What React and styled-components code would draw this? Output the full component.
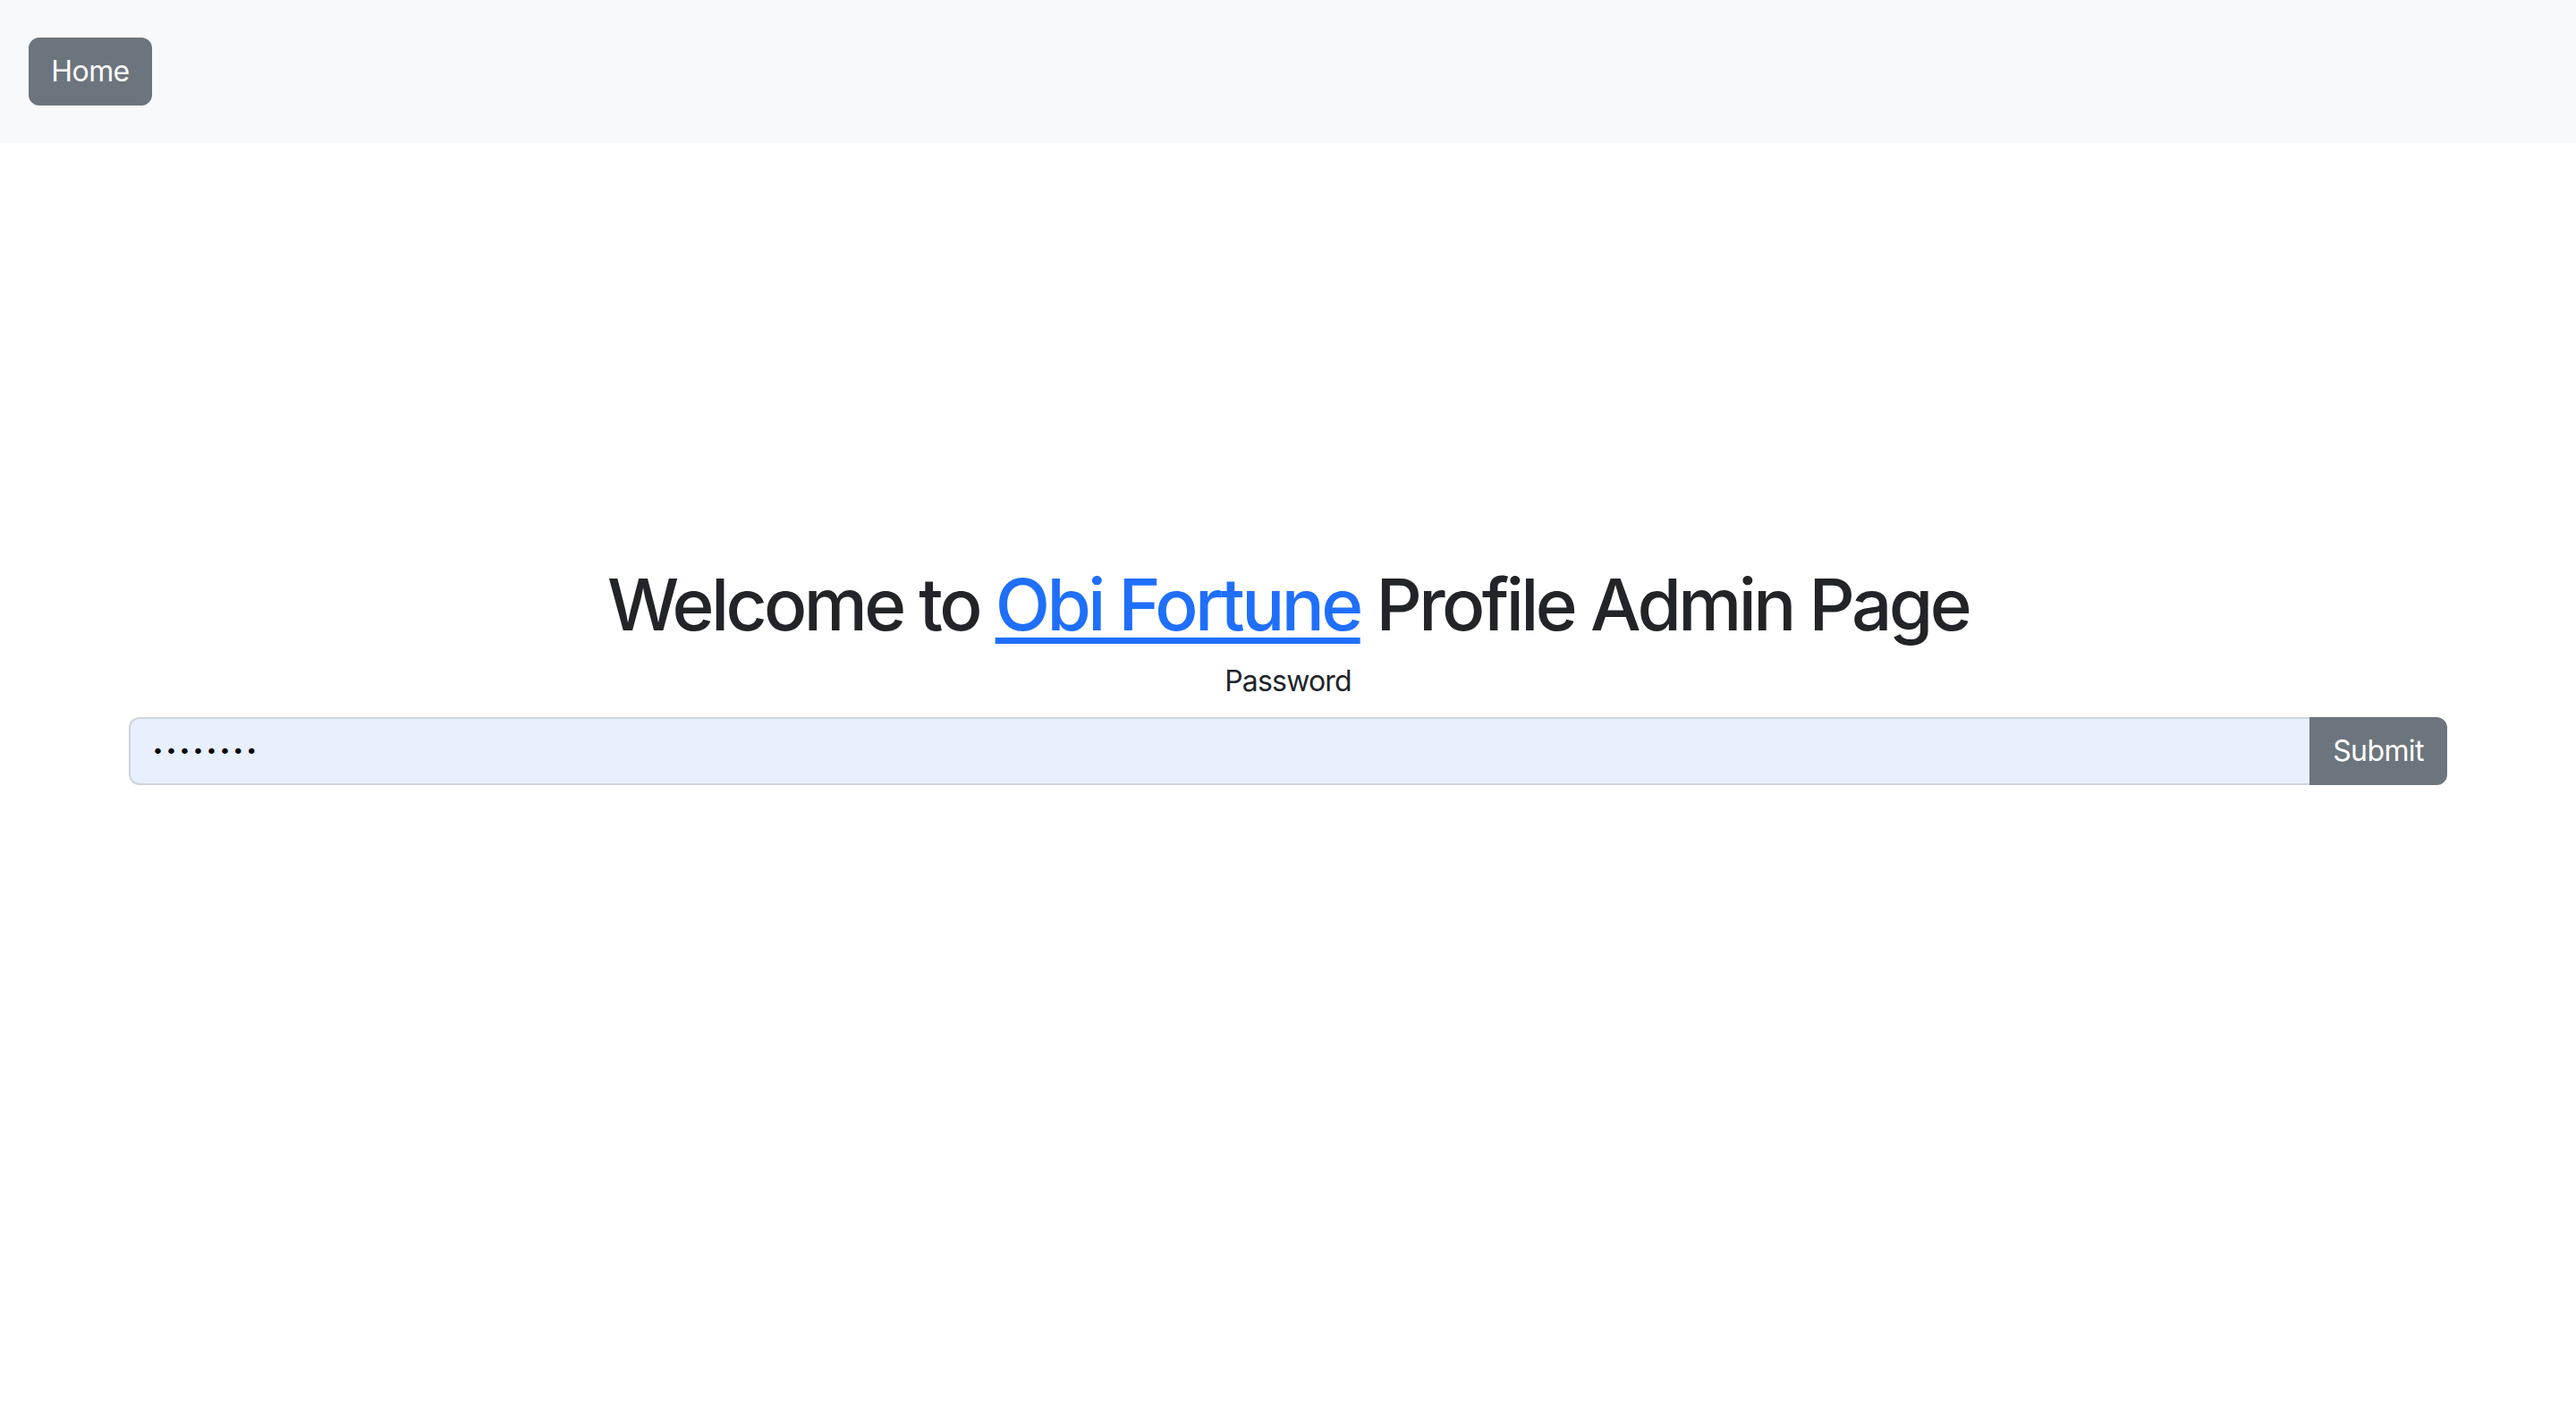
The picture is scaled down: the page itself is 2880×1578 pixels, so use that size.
import styled, { createGlobalStyle } from 'styled-components';

const GlobalStyle = createGlobalStyle`
  body {
    margin: 0;
    background: #ffffff;
    color: #212529;
    font-family: "Inter", "Noto Sans", sans-serif;
  }
`;

const App = () => {
  return (
    <>
      <GlobalStyle />
      <NavBar>
        <HomeBtn type="button">Home</HomeBtn>
      </NavBar>
      <Main>
        <Title>
          Welcome to <TitleLink href="#">Obi Fortune</TitleLink> Profile Admin Page
        </Title>
        <Label htmlFor="password">Password</Label>
        <InputGroup>
          <PasswordInput id="password" type="password" defaultValue="password" readOnly />
          <SubmitBtn type="button">Submit</SubmitBtn>
        </InputGroup>
      </Main>
    </>
  );
};

const NavBar = styled.nav`
  box-sizing: border-box;
  height: 160px;
  background-color: #f8f9fa;
  display: flex;
  align-items: flex-start;
  padding: 42px 32px 0;
`;

const Button = styled.button`
  box-sizing: border-box;
  height: 76px;
  padding: 0;
  font-family: "Inter", "Noto Sans", sans-serif;
  font-size: 32px;
  line-height: 48px;
  letter-spacing: -0.6px;
  color: #ffffff;
  background-color: #6c757d;
  border: 2px solid #6c757d;
  border-radius: 12px;
  cursor: pointer;
`;

const HomeBtn = styled(Button)`
  width: 138px;
`;

const SubmitBtn = styled(Button)`
  width: 154px;
  border-radius: 0 12px 12px 0;
  flex: none;
`;

const Main = styled.main`
  box-sizing: border-box;
  max-width: 2640px;
  margin: 0 auto;
  padding: 468px 24px 0;
  display: flex;
  flex-direction: column;
  align-items: center;
`;

const Title = styled.h1`
  margin: 0 0 14px;
  font-size: 80px;
  font-weight: 500;
  line-height: 96px;
  letter-spacing: -3.6px;
  text-align: center;
`;

const TitleLink = styled.a`
  color: #1f6ffb;
  text-decoration: underline;
  text-decoration-thickness: 7px;
  text-underline-offset: 8px;
`;

const Label = styled.label`
  margin-bottom: 16px;
  font-size: 32px;
  line-height: 48px;
  letter-spacing: -0.8px;
`;

const InputGroup = styled.div`
  display: flex;
  width: 100%;
`;

const PasswordInput = styled.input`
  box-sizing: border-box;
  flex: 1;
  min-width: 0;
  height: 76px;
  padding: 0 24px;
  font-family: "DejaVu Sans", sans-serif;
  font-size: 22px;
  letter-spacing: 2px;
  color: #000000;
  background-color: #e8f0fe;
  border: 2px solid #ced4da;
  border-right: none;
  border-radius: 12px 0 0 12px;
  outline: none;
`;

export default App;
